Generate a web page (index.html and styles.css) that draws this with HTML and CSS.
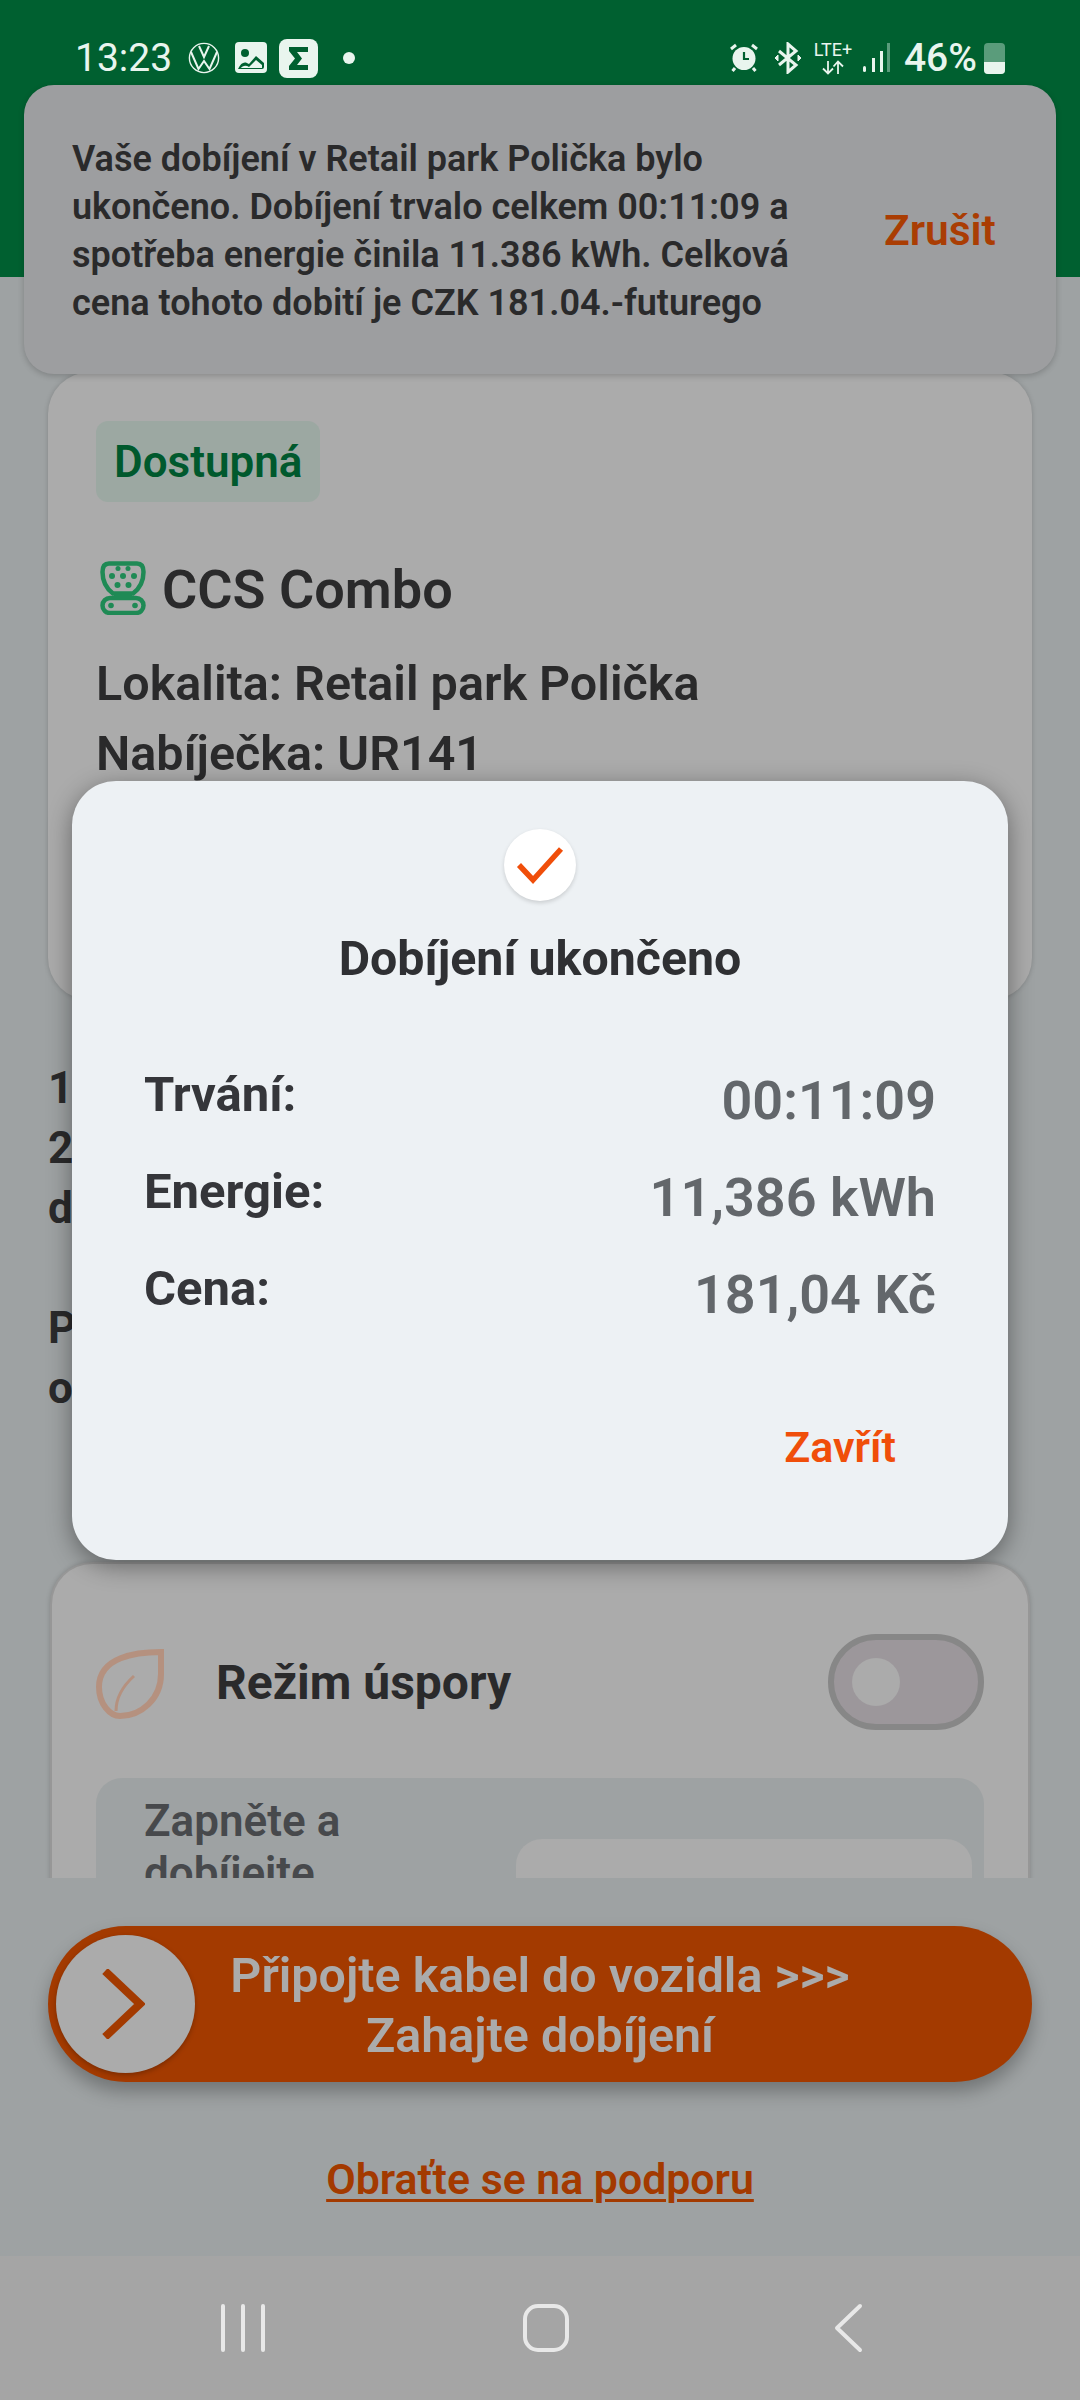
FILE: index.html
```html
<!DOCTYPE html>
<html lang="cs">
<head>
  <meta charset="UTF-8">
  <meta name="viewport" content="width=device-width, initial-scale=1.0">
  <title>Dobíjení ukončeno</title>
  <link rel="stylesheet" href="styles.css">
</head>
<body>
  <div class="app">
    <header class="top">
      <div class="status">
        <div class="status-left">
          <span class="clock">13:23</span>
          <svg class="ic-vw" viewBox="0 0 32 32" fill="none" stroke="#e9f5ee" stroke-width="1.4">
            <circle cx="16" cy="16" r="14.6"/>
            <path d="M11 4 16 15 21 4M3 10 10.5 27 16 19 21.5 27 29 10" stroke-width="2"/>
          </svg>
          <svg class="ic-photo" viewBox="0 0 32 32">
            <rect width="32" height="31" rx="4" fill="#e9f5ee"/>
            <circle cx="10" cy="11" r="4" fill="#006030"/>
            <path d="M3 27C6 20 10 19 14 22L21 14 29 21V25Q29 27 27 27Z" fill="#006030"/>
            <path d="M5 27C8 23 11 23 14 25L21 18 27 23V26H6Z" fill="#e9f5ee"/>
          </svg>
          <span class="ic-sigma">
            <svg viewBox="0 0 39 39"><path d="M10 8H29V13H18L23 19.500 18 26H29V31H10V27L16 19.500 10 12Z" fill="#006030"/></svg>
          </span>
          <span class="status-dot"></span>
        </div>
        <div class="status-right">
          <svg class="ic-alarm" viewBox="0 0 30 30" fill="none">
            <circle cx="15" cy="15.500" r="11.500" fill="#e9f5ee"/>
            <path d="M15 9V16H20" stroke="#006030" stroke-width="2.200"/>
            <path d="M2 6 7 2M28 6 23 2M6 25 3.500 28M24 25 26.500 28" stroke="#e9f5ee" stroke-width="3"/>
          </svg>
          <svg class="ic-bt" viewBox="0 0 28 32" fill="none" stroke="#e9f5ee" stroke-width="3">
            <path d="M5 9 22 23 14 30V2L22 9 5 23"/>
            <path d="M1 16 4 13V19ZM27 16 24 13V19Z" fill="#e9f5ee" stroke-width="1"/>
          </svg>
          <div class="net">
            <span class="net-label">LTE+</span>
            <svg viewBox="0 0 26 15" fill="none" stroke="#e9f5ee" stroke-width="1.800"><path d="M8 1V13M3 8.500 8 13.500 13 8.500M18 14V2M13.500 6.500 18 1.500 23 6.500"/></svg>
          </div>
          <svg class="ic-signal" viewBox="0 0 28 30">
            <rect x="1" y="23" width="3" height="6" rx="1.500" fill="#e9f5ee"/>
            <rect x="10" y="15" width="3" height="14" fill="#e9f5ee"/>
            <rect x="18" y="8" width="3" height="21" fill="#e9f5ee"/>
            <rect x="25" y="0" width="3" height="29" fill="#5a9c7b"/>
          </svg>
          <span class="batt-text">46%</span>
          <span class="battery"><span class="battery-fill"></span></span>
        </div>
      </div>
    </header>

    <main class="content">
      <section class="card card-charger">
        <span class="badge">Dostupná</span>
        <div class="conn">
          <svg class="ic-ccs" viewBox="0 0 46 54" fill="none" stroke="#1f8a55" stroke-width="4.500">
            <path d="M9 2.500H37Q43.500 2.500 43.500 11C43.500 21 39 28 33 32.500H13C7 28 2.500 21 2.500 11Q2.500 2.500 9 2.500Z"/>
            <rect x="2.500" y="37" width="41" height="15" rx="7.500"/>
            <path d="M14 34.500H32" stroke-width="5"/>
            <g fill="#1f8a55" stroke="none">
              <circle cx="18" cy="7.500" r="2.500"/><circle cx="28" cy="7.500" r="2.500"/>
              <circle cx="12" cy="15" r="3"/><circle cx="23" cy="15" r="3"/><circle cx="34" cy="15" r="3"/>
              <circle cx="17.500" cy="24" r="3"/><circle cx="28.500" cy="24" r="3"/>
              <circle cx="11" cy="44.500" r="2.800"/><circle cx="35" cy="44.500" r="2.800"/>
            </g>
          </svg>
          <span class="conn-name">CCS Combo</span>
        </div>
        <p class="info">Lokalita: Retail park Polička</p>
        <p class="info">Nabíječka: UR141</p>
      </section>

      <div class="steps">
        <p>1</p>
        <p>2</p>
        <p>d</p>
        <p class="steps-gap">P</p>
        <p>o</p>
      </div>

      <section class="card card-eco">
        <div class="eco-head">
          <svg class="ic-leaf" viewBox="0 0 68 70" fill="none" stroke="#b5917f" stroke-width="6">
            <path d="M65 3C40 3 3 8 3 38C3 55 14 67 24 67C45 67 65 50 65 25Z"/>
            <path d="M38 27C28 36 20 48 20 62" stroke-width="3"/>
          </svg>
          <span class="eco-title">Režim úspory</span>
          <span class="toggle"><span class="toggle-knob"></span></span>
        </div>
        <div class="eco-panel">
          <p class="eco-text">Zapněte a dobíjejte</p>
          <div class="eco-box"></div>
        </div>
      </section>
    </main>

    <footer class="bottom">
      <div class="slide">
        <span class="slide-thumb">
          <svg viewBox="0 0 44 70" fill="none" stroke="#a33a00" stroke-width="8"><path d="M4 3 39 36 4 69" transform="translate(0 -1)"/></svg>
        </span>
        <span class="slide-text">Připojte kabel do vozidla &gt;&gt;&gt;<br>Zahajte dobíjení</span>
      </div>
      <a class="support" href="#">Obraťte se na podporu</a>
    </footer>

    <nav class="navbar">
      <span class="nav-slot">
        <svg class="nav-ic" viewBox="0 0 46 50" fill="none" stroke="#e8e8e8" stroke-width="4" stroke-linecap="round"><path d="M3 3V47M23 3V47M43 3V47"/></svg>
      </span>
      <span class="nav-slot">
        <svg class="nav-ic" viewBox="0 0 46 50" fill="none" stroke="#e8e8e8" stroke-width="4"><rect x="2" y="3" width="42" height="44" rx="13"/></svg>
      </span>
      <span class="nav-slot">
        <svg class="nav-ic" viewBox="0 0 46 50" fill="none" stroke="#e8e8e8" stroke-width="4" stroke-linecap="round" stroke-linejoin="round"><path d="M34 3 11 25 34 47"/></svg>
      </span>
    </nav>
  </div>

  <!-- notification on top of the page -->
  <div class="toast">
    <p class="toast-text">Vaše dobíjení v Retail park Polička bylo ukončeno. Dobíjení trvalo celkem 00:11:09 a spotřeba energie činila 11.386 kWh. Celková cena tohoto dobití je CZK 181.04.-futurego</p>
    <span class="toast-action">Zrušit</span>
  </div>

  <!-- result dialog -->
  <div class="dialog">
    <span class="dialog-check">
      <svg viewBox="0 0 48 40" fill="none" stroke="#f04e0a" stroke-width="5.500"><path d="M3 20 17 35 45 4"/></svg>
    </span>
    <h2 class="dialog-title">Dobíjení ukončeno</h2>
    <div class="rows">
      <div class="row"><span class="row-label">Trvání:</span><span class="row-value">00:11:09</span></div>
      <div class="row"><span class="row-label">Energie:</span><span class="row-value">11,386 kWh</span></div>
      <div class="row"><span class="row-label">Cena:</span><span class="row-value">181,04 Kč</span></div>
    </div>
    <div class="dialog-actions"><span class="dialog-close">Zavřít</span></div>
  </div>
</body>
</html>
```

FILE: styles.css
```css
* {
  box-sizing: border-box;
}
body {
  margin: 0;
  width: 1080px;
  height: 2400px;
  position: relative;
  overflow: hidden;
  background: #9ea2a3;
  font-family: Roboto, sans-serif;
  color: #2a2a2b;
}
p, h2 {
  margin: 0;
}
.app {
  height: 2400px;
  display: flex;
  flex-direction: column;
}

/* status bar */
.top {
  height: 277px;
  background: #006030;
  flex: none;
}
.status {
  padding: 36px 75px 0 76px;
  height: 80px;
  display: flex;
  justify-content: space-between;
  align-items: center;
  color: #e9f5ee;
}
.status-left, .status-right {
  display: flex;
  align-items: center;
}
.clock {
  font-size: 39px;
  line-height: 44px;
  margin-left: -1px;
  margin-right: 16px;
}
.ic-vw {
  width: 32px;
  height: 32px;
  margin-right: 15px;
}
.ic-photo {
  width: 32px;
  height: 32px;
  margin-right: 12px;
}
.ic-sigma {
  width: 39px;
  height: 39px;
  border-radius: 8px;
  background: #e9f5ee;
  margin-right: 25px;
  display: flex;
}
.status-dot {
  width: 12px;
  height: 12px;
  border-radius: 50%;
  background: #e9f5ee;
}
.ic-alarm {
  width: 30px;
  height: 30px;
  margin-right: 15px;
}
.ic-bt {
  width: 28px;
  height: 32px;
  margin-right: 12px;
}
.net {
  width: 38px;
  margin-right: 10px;
  display: flex;
  flex-direction: column;
  align-items: center;
}
.net-label {
  font-size: 18px;
  line-height: 15px;
}
.net svg {
  width: 26px;
  height: 15px;
  margin-top: 3px;
}
.ic-signal {
  width: 28px;
  height: 30px;
  margin-right: 14px;
}
.batt-text {
  font-size: 39px;
  font-weight: 500;
  line-height: 44px;
  margin-right: 7px;
}
.battery {
  width: 21px;
  height: 31px;
  border-radius: 4px;
  background: #5a9c7b;
  display: flex;
  align-items: flex-end;
  overflow: hidden;
}
.battery-fill {
  width: 100%;
  height: 12px;
  background: #e9f5ee;
}

/* scrolling part of the page */
.content {
  height: 1601px;
  flex: none;
  overflow: hidden;
  padding: 95px 48px 0;
}
.card {
  background: #ababab;
  border-radius: 42px;
  box-shadow: 0 0 5px rgba(0, 0, 0, 0.18);
}
.card-charger {
  height: 628px;
  padding: 49px 48px 0;
}
.badge {
  display: inline-block;
  height: 81px;
  padding: 0 18px;
  line-height: 83px;
  font-size: 44px;
  font-weight: 600;
  color: #00592d;
  background: #9ca8a2;
  border-radius: 12px;
}
.conn {
  margin-top: 57px;
  display: flex;
  align-items: center;
  gap: 16px;
}
.ic-ccs {
  width: 46px;
  height: 54px;
  margin-left: 4px;
  flex: none;
}
.conn-name {
  font-size: 54px;
  font-weight: 600;
  line-height: 54px;
  margin-top: 4px;
}
.info {
  font-size: 48.5px;
  font-weight: 600;
  line-height: 70px;
}
.conn + .info {
  margin-top: 32px;
}

.steps {
  margin-top: 58px;
  height: 504px;
  font-size: 44px;
  font-weight: 700;
  line-height: 60px;
}
.steps-gap {
  margin-top: 60px;
}

.card-eco {
  height: 420px;
  margin: 0 2px;
  padding: 0 44px;
  overflow: hidden;
  border: 2px solid #979797;
  border-bottom: none;
  border-radius: 42px 42px 0 0;
}
.eco-head {
  height: 214px;
  padding-top: 22px;
  display: flex;
  align-items: center;
}
.ic-leaf {
  width: 68px;
  height: 70px;
  flex: none;
  margin-top: 3px;
}
.eco-title {
  margin-left: 52px;
  font-size: 48px;
  font-weight: 700;
  flex: 1;
}
.toggle {
  width: 156px;
  height: 96px;
  border: 6px solid #878787;
  border-radius: 48px;
  background: #9c979b;
  display: flex;
  align-items: center;
  padding-left: 18px;
}
.toggle-knob {
  width: 48px;
  height: 48px;
  border-radius: 50%;
  background: #ababab;
}
.eco-panel {
  background: #9ea2a3;
  border-radius: 26px;
  height: 200px;
  padding: 0 12px 0 48px;
  display: flex;
  justify-content: space-between;
}
.eco-text {
  width: 260px;
  padding-top: 17px;
  font-size: 44px;
  font-weight: 600;
  line-height: 52px;
  color: #47494c;
}
.eco-box {
  width: 456px;
  margin-top: 61px;
  height: 120px;
  background: #ababab;
  border-radius: 26px;
}

/* slider and support link */
.bottom {
  height: 378px;
  flex: none;
  padding: 48px 48px 0;
  display: flex;
  flex-direction: column;
  align-items: center;
}
.slide {
  width: 984px;
  height: 156px;
  position: relative;
  background: #a33a00;
  border-radius: 78px;
  box-shadow: 0 10px 18px rgba(0, 0, 0, 0.28);
  display: flex;
  align-items: center;
  justify-content: center;
}
.slide-thumb {
  position: absolute;
  left: 8px;
  top: 9px;
  width: 139px;
  height: 138px;
  border-radius: 50%;
  background: #ababab;
  box-shadow: 0 2px 5px rgba(0, 0, 0, 0.25);
  display: flex;
  align-items: center;
  justify-content: center;
}
.slide-thumb svg {
  width: 44px;
  height: 70px;
  margin-left: -5px;
}
.slide-text {
  padding-top: 4px;
  font-size: 48.4px;
  font-weight: 600;
  line-height: 60px;
  text-align: center;
  color: #ababab;
}
.support {
  margin-top: 71px;
  font-size: 42.8px;
  font-weight: 600;
  line-height: 52px;
  color: #a33a00;
  text-decoration: underline;
  text-decoration-thickness: 3px;
  text-underline-offset: 5px;
}

.navbar {
  height: 144px;
  flex: none;
  background: #a5a5a5;
  padding-left: 12px;
  display: flex;
  justify-content: center;
  align-items: center;
}
.nav-slot {
  width: 303px;
  display: flex;
  justify-content: center;
}
.nav-ic {
  width: 46px;
  height: 50px;
}

/* notification */
.toast {
  position: absolute;
  left: 24px;
  top: 85px;
  width: 1032px;
  height: 289px;
  padding-left: 48px;
  background: #9d9ea0;
  border-radius: 30px;
  box-shadow: 0 2px 6px rgba(0, 0, 0, 0.2);
  display: flex;
  align-items: center;
}
.toast-text {
  width: 760px;
  padding-top: 2px;
  font-size: 36px;
  font-weight: 600;
  line-height: 48px;
}
.toast-action {
  margin-left: 52px;
  padding-top: 2px;
  font-size: 42.5px;
  font-weight: 600;
  color: #aa3d03;
}

/* dialog */
.dialog {
  position: absolute;
  left: 72px;
  top: 781px;
  width: 936px;
  height: 779px;
  padding: 48px 72px 0;
  background: #edf1f4;
  border-radius: 44px;
  box-shadow: 0 6px 24px rgba(0, 0, 0, 0.4);
  display: flex;
  flex-direction: column;
  align-items: center;
}
.dialog-check {
  width: 72px;
  height: 72px;
  border-radius: 50%;
  background: #fff;
  box-shadow: 0 2px 4px rgba(0, 0, 0, 0.15);
  display: flex;
  align-items: center;
  justify-content: center;
  flex: none;
}
.dialog-check svg {
  width: 48px;
  height: 40px;
}
.dialog-title {
  margin-top: 28px;
  font-size: 48.3px;
  font-weight: 700;
  line-height: 60px;
  color: #2f3033;
}
.rows {
  width: 100%;
  margin-top: 76px;
}
.row {
  height: 97px;
  display: flex;
  justify-content: space-between;
  align-items: flex-start;
}
.row-label {
  font-size: 49px;
  font-weight: 700;
  line-height: 60px;
  color: #35363a;
}
.row-value {
  font-size: 54px;
  font-weight: 600;
  line-height: 72px;
  color: #63676b;
}
.dialog-actions {
  width: 100%;
  margin-top: 66px;
  padding-right: 40px;
  display: flex;
  justify-content: flex-end;
}
.dialog-close {
  font-size: 43px;
  font-weight: 600;
  line-height: 50px;
  color: #f04e0a;
}
```
